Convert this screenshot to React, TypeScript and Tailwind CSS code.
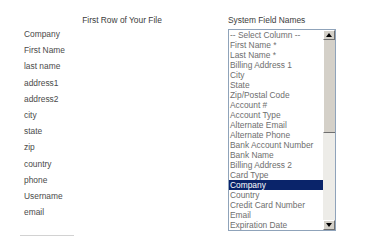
const fileColumns = [
  "Company",
  "First Name",
  "last name",
  "address1",
  "address2",
  "city",
  "state",
  "zip",
  "country",
  "phone",
  "Username",
  "email",
];

const systemFields = [
  "-- Select Column --",
  "First Name *",
  "Last Name *",
  "Billing Address 1",
  "City",
  "State",
  "Zip/Postal Code",
  "Account #",
  "Account Type",
  "Alternate Email",
  "Alternate Phone",
  "Bank Account Number",
  "Bank Name",
  "Billing Address 2",
  "Card Type",
  "Company",
  "Country",
  "Credit Card Number",
  "Email",
  "Expiration Date",
];

function ScrollButton({ dir }: { dir: "up" | "down" }) {
  return (
    <div className="h-[10px] flex items-center justify-center bg-[#d4d0c8] border-t border-l border-t-white border-l-white border-b border-r border-b-[#6f6f6f] border-r-[#6f6f6f]">
      <svg width="6" height="4" viewBox="0 0 6 4">
        {dir === "up" ? <path d="M3 0 L6 4 L0 4 Z" fill="#000" /> : <path d="M0 0 L6 0 L3 4 Z" fill="#000" />}
      </svg>
    </div>
  );
}

export default function App() {
  return (
    <div className="w-[366px] h-[248px] bg-white pl-[24px] pt-[14px] font-['Liberation_Sans',Arial,sans-serif] text-[8.4px]">
      <div className="flex">
        {/* left: first row of the uploaded file */}
        <div className="w-[196px]">
          <div className="text-center leading-[12px] text-[#3c3c3c]">First Row of Your File</div>
          <div className="text-[#4a4a4a]">
            {fileColumns.map((col) => (
              <div key={col} className="leading-[16.2px] h-[16.2px]">
                {col}
              </div>
            ))}
          </div>
          <div className="-ml-[4px] mt-[15px] h-px w-[54px] bg-[#d2d2d2]" />
        </div>

        {/* right: system field mapping */}
        <div className="ml-[8px]">
          <div className="leading-[13px] mb-[2px] text-[#3c3c3c]">System Field Names</div>
          <div className="flex w-[108px] border border-[#8fa3ba] bg-white">
            <div className="flex-1">
              {systemFields.map((f) => (
                <div
                  key={f}
                  className={
                    f === "Company"
                      ? "h-[10px] leading-[10px] pl-[1px] whitespace-nowrap bg-[#0a246a] text-white"
                      : "h-[10px] leading-[10px] pl-[1px] whitespace-nowrap text-[#6e6e6e]"
                  }
                >
                  {f}
                </div>
              ))}
            </div>
            <div className="w-[12px] flex flex-col">
              <ScrollButton dir="up" />
              <div className="h-[93px] bg-[#d4d0c8] border-b border-[#6f6f6f] border-l border-l-white" />
              <div className="flex-1 bg-[#edece8]" />
              <ScrollButton dir="down" />
            </div>
          </div>
        </div>
      </div>
    </div>
  );
}
